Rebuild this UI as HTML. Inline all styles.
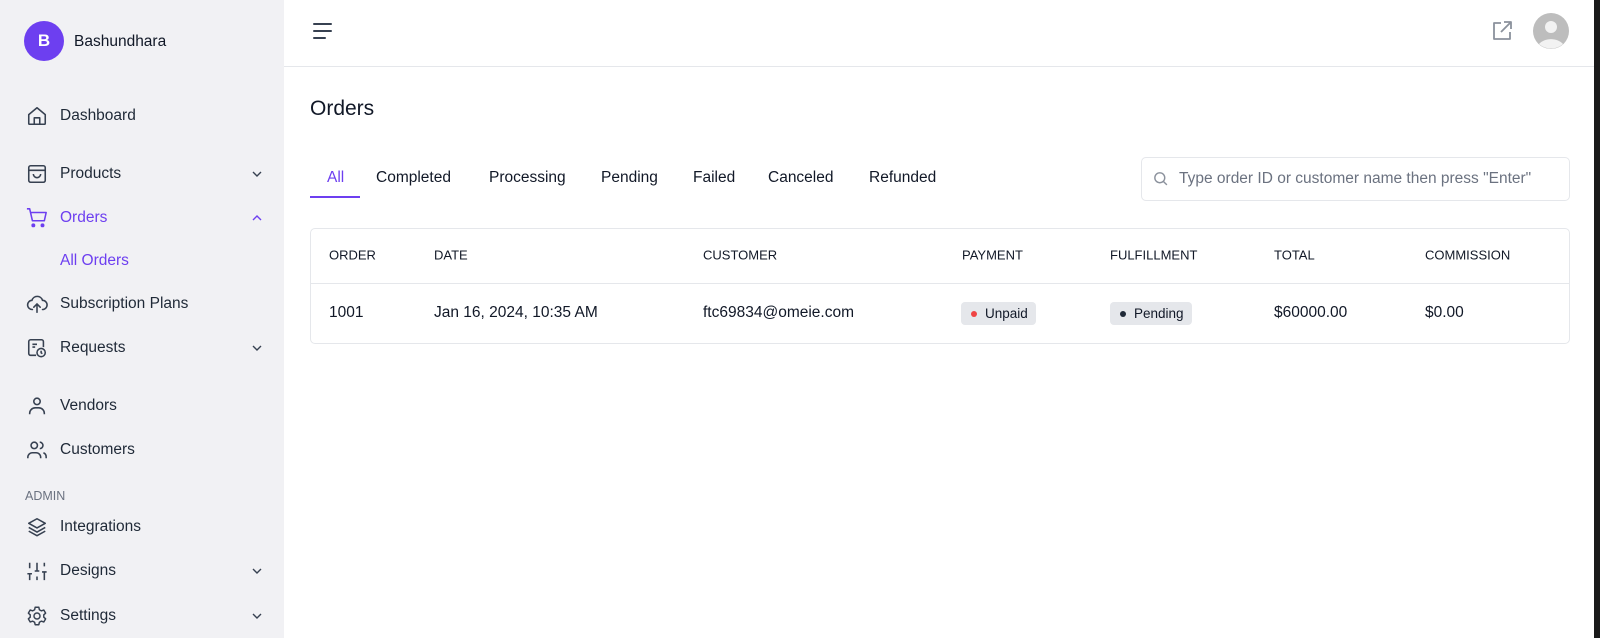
<!DOCTYPE html>
<html><head><style>
*{box-sizing:border-box;margin:0;padding:0}
body{width:1600px;height:638px;overflow:hidden;font-family:"Liberation Sans",sans-serif;background:#fff;position:relative;color:#111827}
.side{position:absolute;left:0;top:0;width:284px;height:638px;background:#f1f1f4}
.abs{position:absolute;white-space:nowrap}
.nav{position:absolute;left:60px;font-size:15.5px;color:#1f2937;transform:translateY(-50%)}
.ic{position:absolute;left:26px;width:22px;height:22px;transform:translateY(-50%)}
.chev{position:absolute;left:251px;width:12px;height:12px;transform:translateY(-50%)}
.tab{position:absolute;top:178px;transform:translateY(-50%);font-size:15.5px;color:#111827}
.th{position:absolute;top:255px;transform:translateY(-50%);font-size:13px;color:#111827}
.td{position:absolute;top:313px;transform:translateY(-50%);font-size:15.5px;color:#111827}
.badge{position:absolute;top:302px;height:23px;background:#e5e7eb;border-radius:4px;font-size:13.5px;line-height:23px;padding:0 8px 0 24px}
.badge i{position:absolute;left:10px;top:9px;width:6px;height:6px;border-radius:50%}
</style></head><body>
<div class="side">
<div class="abs" style="left:24px;top:21px;width:40px;height:40px;border-radius:50%;background:#6d3ff0;color:#fff;font-weight:bold;font-size:17px;text-align:center;line-height:40px">B</div>
<div class="abs" style="left:74px;top:33px;font-size:15.5px;color:#111827">Bashundhara</div>

<svg class="ic" style="top:116px" viewBox="0 0 24 24" fill="none" stroke="#374151" stroke-width="1.7" stroke-linejoin="round"><path d="M3 10.5L12 3l9 7.5V20a1 1 0 0 1-1 1H4a1 1 0 0 1-1-1z"/><path d="M9 21v-7h6v7"/></svg>
<div class="nav" style="top:116px">Dashboard</div>

<svg class="ic" style="top:174px" viewBox="0 0 24 24" fill="none" stroke="#374151" stroke-width="1.7" stroke-linejoin="round"><rect x="3" y="3" width="18" height="18" rx="2"/><path d="M3 8h18M8 12a4 4 0 0 0 8 0"/></svg>
<div class="nav" style="top:174px">Products</div>
<svg class="chev" style="top:174px" viewBox="0 0 12 12" fill="none" stroke="#374151" stroke-width="1.4"><path d="M2 4l4 4 4-4"/></svg>

<svg class="ic" style="top:218px" viewBox="0 0 24 24" fill="none" stroke="#6d3ff0" stroke-width="1.7" stroke-linejoin="round"><path d="M1 2h3l3 13h13l2-9H5"/><circle cx="8" cy="20" r="1.3" fill="#6d3ff0"/><circle cx="18" cy="20" r="1.3" fill="#6d3ff0"/></svg>
<div class="nav" style="top:218px;color:#6d3ff0">Orders</div>
<svg class="chev" style="top:218px" viewBox="0 0 12 12" fill="none" stroke="#6d3ff0" stroke-width="1.4"><path d="M2 8l4-4 4 4"/></svg>
<div class="nav" style="top:261px;color:#6d3ff0">All Orders</div>

<svg class="ic" style="top:304px" viewBox="0 0 24 24" fill="none" stroke="#374151" stroke-width="1.7" stroke-linecap="round"><path d="M7 18a5 5 0 0 1-.5-10A6 6 0 0 1 18 8a4.5 4.5 0 0 1 0 10"/><path d="M12 21v-9M8.5 15.5L12 12l3.5 3.5"/></svg>
<div class="nav" style="top:304px">Subscription Plans</div>

<svg class="ic" style="top:348px" viewBox="0 0 24 24" fill="none" stroke="#374151" stroke-width="1.7"><path d="M11 20H5a2 2 0 0 1-2-2V5a2 2 0 0 1 2-2h12a2 2 0 0 1 2 2v6"/><path d="M7 8h5M7 11h3"/><circle cx="16.5" cy="17" r="4.5"/><path d="M16.5 15v2.2l1.3 1"/></svg>
<div class="nav" style="top:348px">Requests</div>
<svg class="chev" style="top:348px" viewBox="0 0 12 12" fill="none" stroke="#374151" stroke-width="1.4"><path d="M2 4l4 4 4-4"/></svg>

<svg class="ic" style="top:406px" viewBox="0 0 24 24" fill="none" stroke="#374151" stroke-width="1.7"><circle cx="12" cy="7" r="3.5"/><path d="M4 21v-1a6 6 0 0 1 6-6h4a6 6 0 0 1 6 6v1"/></svg>
<div class="nav" style="top:406px">Vendors</div>

<svg class="ic" style="top:450px" viewBox="0 0 24 24" fill="none" stroke="#374151" stroke-width="1.7"><circle cx="9" cy="7" r="3.5"/><path d="M2 21v-1a5 5 0 0 1 5-5h4a5 5 0 0 1 5 5v1M15 3.5a3.5 3.5 0 0 1 0 7M19 15a5 5 0 0 1 3 5v1"/></svg>
<div class="nav" style="top:450px">Customers</div>

<div class="abs" style="left:25px;top:489px;font-size:12.5px;color:#6b7280">ADMIN</div>

<svg class="ic" style="top:527px" viewBox="0 0 24 24" fill="none" stroke="#374151" stroke-width="1.7" stroke-linejoin="round"><path d="M12 3l9 5-9 5-9-5z"/><path d="M3 12.5l9 5 9-5M3 16.5l9 5 9-5"/></svg>
<div class="nav" style="top:527px">Integrations</div>

<svg class="ic" style="top:571px" viewBox="0 0 24 24" fill="none" stroke="#374151" stroke-width="1.7"><path d="M4 3v6M4 15v7M1.5 15h5M12 3v9M12 18v4M9.5 12h5M20 3v4M20 13v9M17.5 13h5"/></svg>
<div class="nav" style="top:571px">Designs</div>
<svg class="chev" style="top:571px" viewBox="0 0 12 12" fill="none" stroke="#374151" stroke-width="1.4"><path d="M2 4l4 4 4-4"/></svg>

<svg class="ic" style="top:616px" viewBox="0 0 24 24" fill="none" stroke="#374151" stroke-width="1.6" stroke-linejoin="round"><path d="M10 2.5h4l.6 2.7 2.2 1.2 2.6-.9 2 3.4-2 1.8v2.6l2 1.8-2 3.4-2.6-.9-2.2 1.2-.6 2.7h-4l-.6-2.7-2.2-1.2-2.6.9-2-3.4 2-1.8v-2.6l-2-1.8 2-3.4 2.6.9 2.2-1.2z"/><circle cx="12" cy="12" r="3.3"/></svg>
<div class="nav" style="top:616px">Settings</div>
<svg class="chev" style="top:616px" viewBox="0 0 12 12" fill="none" stroke="#374151" stroke-width="1.4"><path d="M2 4l4 4 4-4"/></svg>
</div>

<div class="abs" style="left:284px;top:66px;width:1310px;height:1px;background:#e5e7eb"></div>
<div class="abs" style="left:1594px;top:0;width:6px;height:638px;background:#1a1a1a"></div>

<svg class="abs" style="left:312px;top:21px" width="22" height="20" viewBox="0 0 22 20" fill="none" stroke="#374151" stroke-width="2" stroke-linecap="round"><path d="M2 3h17M2 10h17M2 17h11"/></svg>
<svg class="abs" style="left:1490px;top:19px" width="24" height="24" viewBox="0 0 24 24" fill="none" stroke="#8b919c" stroke-width="1.8" stroke-linejoin="round"><path d="M11 4H4v16h16v-7"/><path d="M14 3h7v7M21 3l-10 10"/></svg>
<svg class="abs" style="left:1533px;top:13px" width="36" height="36" viewBox="0 0 36 36"><circle cx="18" cy="18" r="18" fill="#bdbdbd"/><circle cx="18" cy="14" r="6" fill="#f2f2f2"/><path d="M6 31a14 10 0 0 1 24 0a18 18 0 0 1-24 0z" fill="#f2f2f2"/></svg>

<div class="abs" style="left:310px;top:97px;font-size:21px;color:#111827">Orders</div>

<div class="tab" style="left:327px;color:#6d3ff0">All</div>
<div class="abs" style="left:310px;top:196px;width:50px;height:2px;background:#6d3ff0"></div>
<div class="tab" style="left:376px">Completed</div>
<div class="tab" style="left:489px">Processing</div>
<div class="tab" style="left:601px">Pending</div>
<div class="tab" style="left:693px">Failed</div>
<div class="tab" style="left:768px">Canceled</div>
<div class="tab" style="left:869px">Refunded</div>

<div class="abs" style="left:1141px;top:157px;width:429px;height:44px;border:1px solid #e5e7eb;border-radius:5px"></div>
<svg class="abs" style="left:1152px;top:170px" width="17" height="17" viewBox="0 0 24 24" fill="none" stroke="#8b919c" stroke-width="2"><circle cx="11" cy="11" r="7"/><path d="M16 16l5 5"/></svg>
<div class="abs" style="left:1179px;top:170px;font-size:15.5px;color:#6b7280">Type order ID or customer name then press "Enter"</div>

<div class="abs" style="left:310px;top:228px;width:1260px;height:116px;border:1px solid #e5e7eb;border-radius:5px"></div>
<div class="abs" style="left:311px;top:283px;width:1258px;height:1px;background:#e5e7eb"></div>
<div class="th" style="left:329px">ORDER</div>
<div class="th" style="left:434px">DATE</div>
<div class="th" style="left:703px">CUSTOMER</div>
<div class="th" style="left:962px">PAYMENT</div>
<div class="th" style="left:1110px">FULFILLMENT</div>
<div class="th" style="left:1274px">TOTAL</div>
<div class="th" style="left:1425px">COMMISSION</div>

<div class="td" style="left:329px">1001</div>
<div class="td" style="left:434px">Jan 16, 2024, 10:35 AM</div>
<div class="td" style="left:703px">ftc69834@omeie.com</div>
<div class="badge" style="left:961px"><i style="background:#ef4444"></i>Unpaid</div>
<div class="badge" style="left:1110px"><i style="background:#1f2937"></i>Pending</div>
<div class="td" style="left:1274px">$60000.00</div>
<div class="td" style="left:1425px">$0.00</div>
</body></html>
